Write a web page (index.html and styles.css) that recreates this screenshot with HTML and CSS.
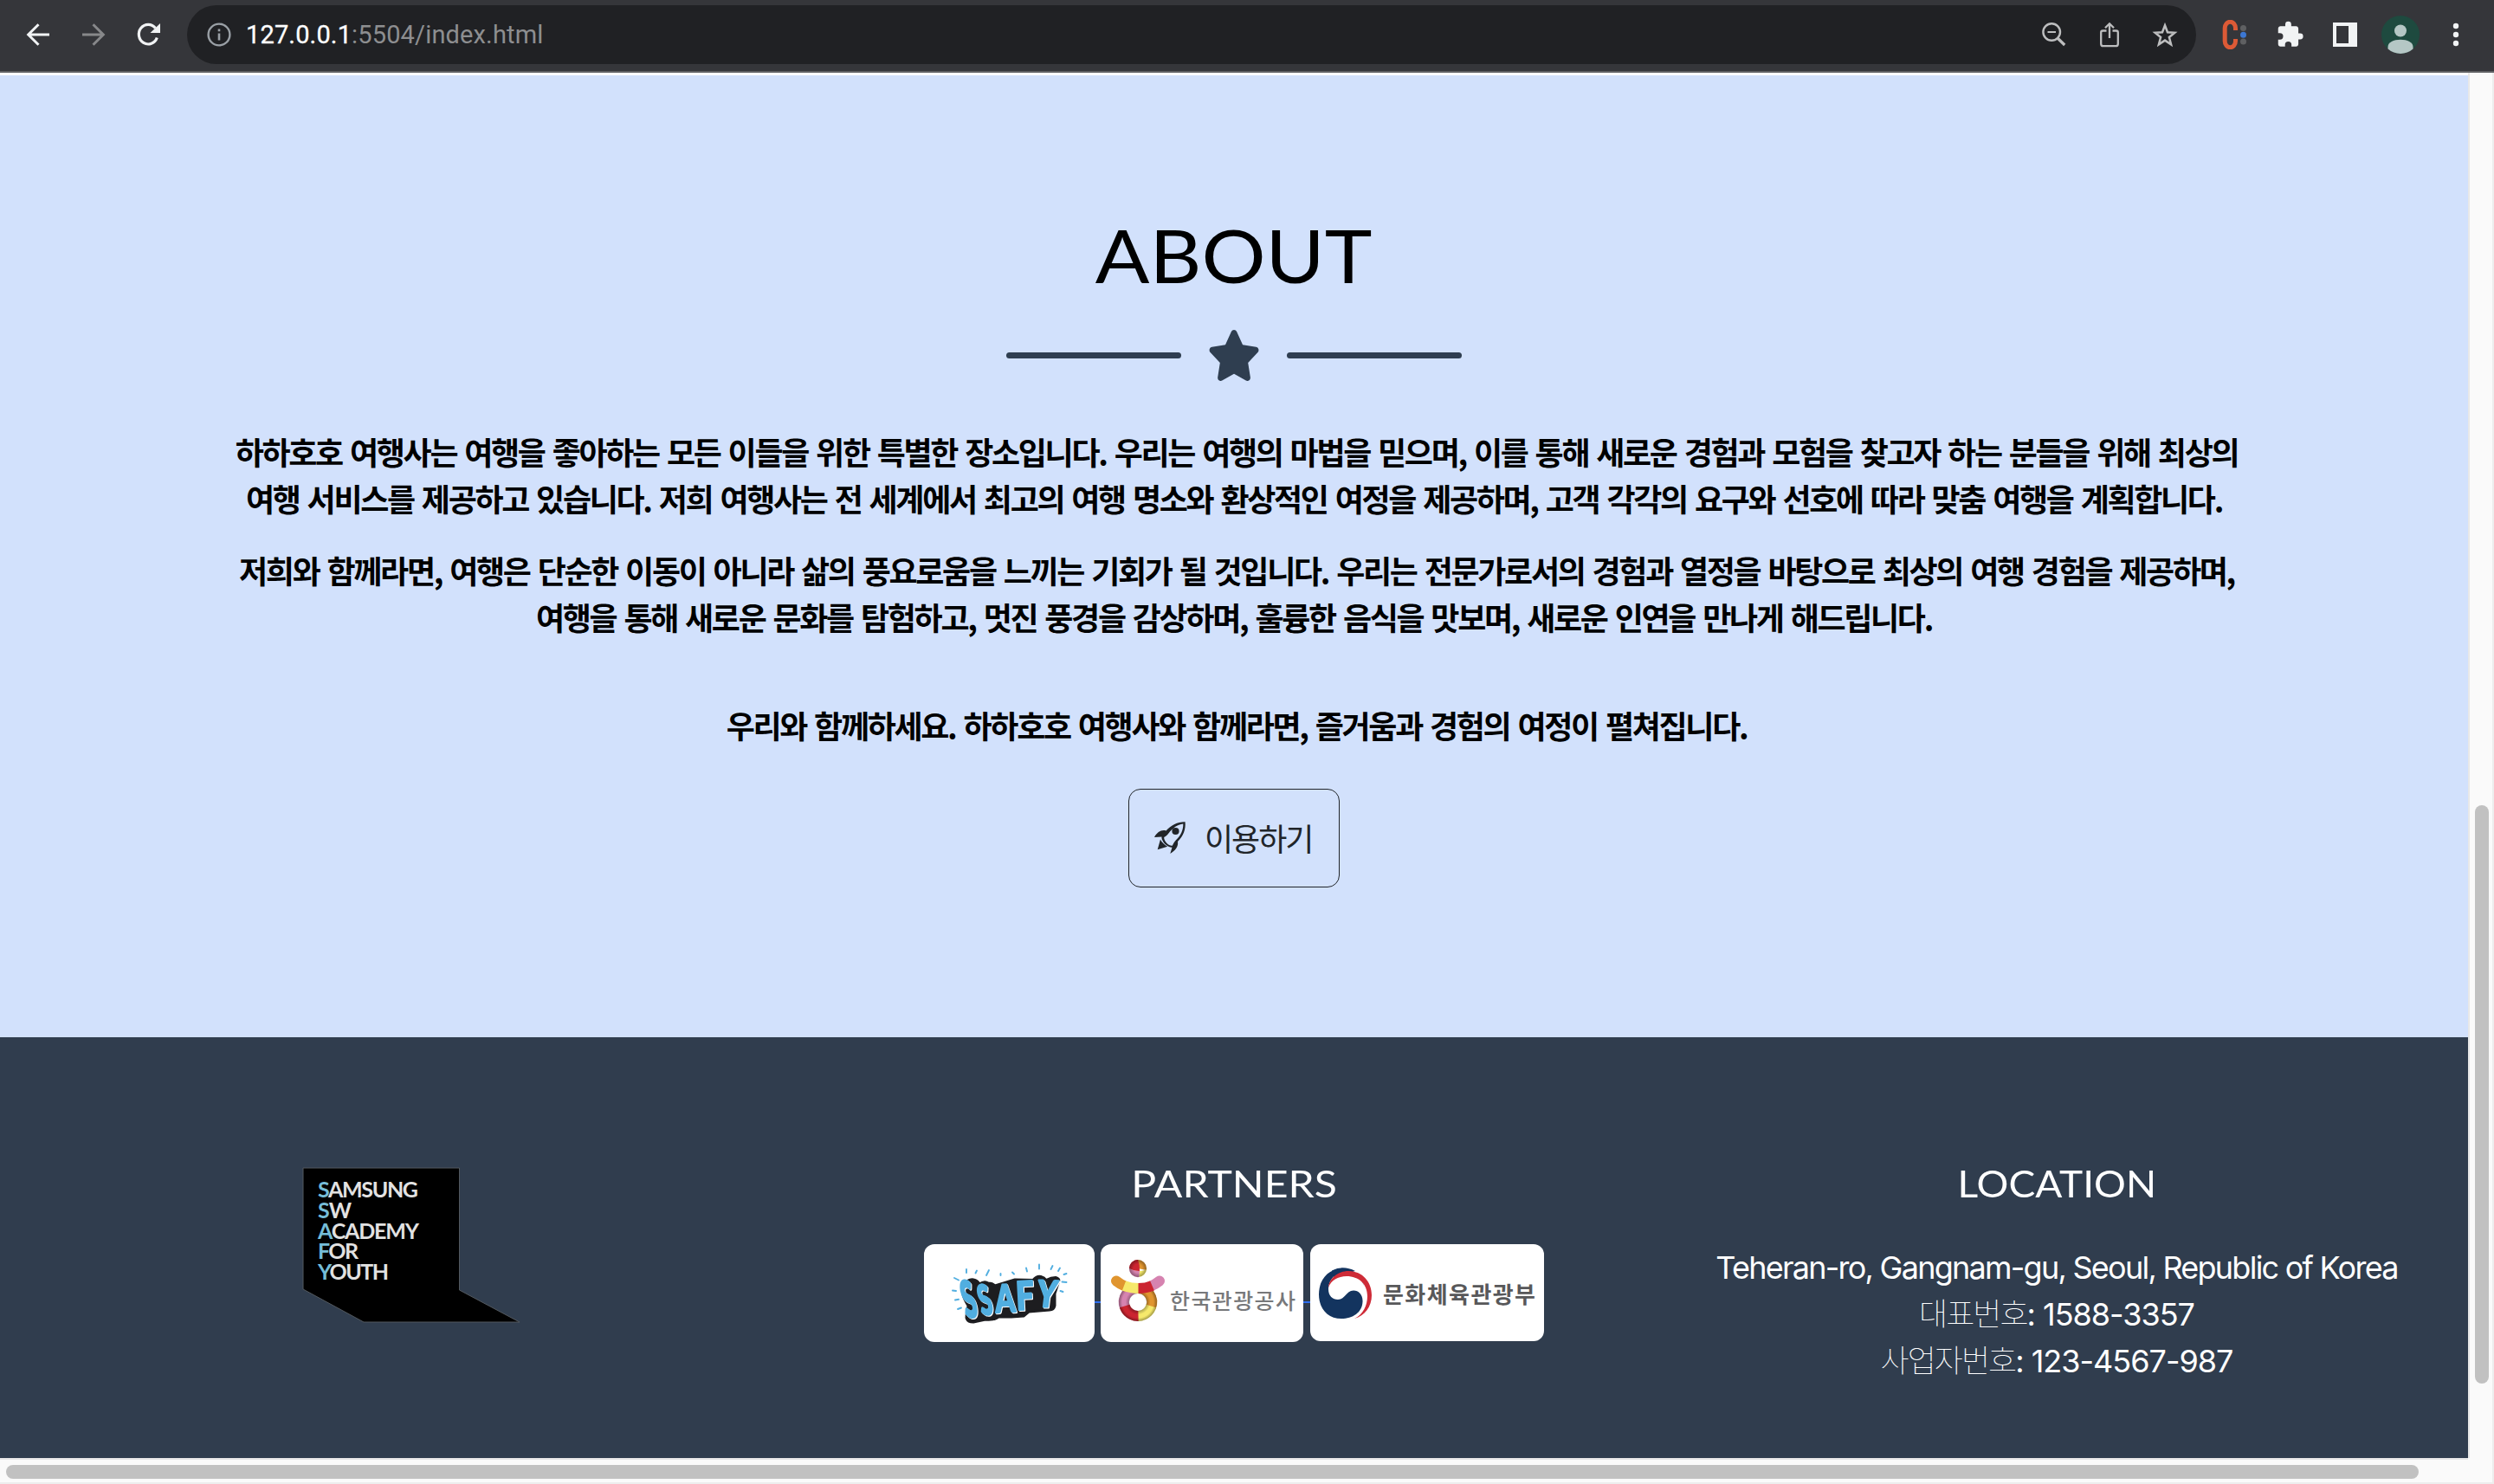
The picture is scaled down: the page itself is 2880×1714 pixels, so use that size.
FILE: index.html
```html
<!DOCTYPE html>
<html lang="ko">
<head>
<meta charset="utf-8">
<title>하하호호 여행사</title>
<link rel="stylesheet" href="styles.css">
</head>
<body>
<header class="toolbar">
  <div class="nav">
    <svg width="30" height="30" viewBox="0 0 30 30" fill="none" stroke="#f1f3f4" stroke-width="3"><path d="M28 15H4M15.500 3.200 3.700 15l11.800 11.800"/></svg>
    <svg width="30" height="30" viewBox="0 0 30 30" fill="none" stroke="#87888a" stroke-width="3"><path d="M2 15h24M14.500 3.200 26.300 15 14.500 26.800"/></svg>
    <svg width="30" height="30" viewBox="0 0 30 30"><path d="M24.300 18.500A10.800 11.300 0 1 1 22.500 7.500" fill="none" stroke="#f1f3f4" stroke-width="3.200"/><path d="M28 2v11H16.500z" fill="#f1f3f4"/></svg>
  </div>
  <div class="omnibox">
    <svg class="info" width="28" height="28" viewBox="0 0 28 28"><circle cx="14" cy="14" r="12.400" fill="none" stroke="#9aa0a6" stroke-width="2.400"/><path d="M12.700 12.500h2.600v8h-2.600zM12.700 7.500h2.600v2.700h-2.600z" fill="#9aa0a6"/></svg>
    <div class="url"><b>127.0.0.1</b>:5504/index.html</div>
    <div class="actions">
      <svg width="32" height="32" viewBox="0 0 32 32" fill="none" stroke="#bdbebf" stroke-width="2.400"><circle cx="13.200" cy="13" r="9.800"/><path d="M8.500 13h9.500" stroke-width="2"/><path d="m20 20 8.200 8" stroke-width="3.200"/></svg>
      <svg width="32" height="32" viewBox="0 0 32 32" fill="none" stroke="#bdbebf" stroke-width="2.300"><path d="M12.500 11.500H8.200a2 2 0 0 0-2 2v13.200a2.500 2.500 0 0 0 2.500 2.500h14.600a2.500 2.500 0 0 0 2.500-2.500V13.500a2 2 0 0 0-2-2h-4.300M16 20V3.500M11 8.300l5-5 5 5"/></svg>
      <svg width="32" height="32" viewBox="0 0 32 32" fill="none" stroke="#bdbebf" stroke-width="2.500"><path d="m16 5.200 3 8 8.300.5-6.400 5.300 2.200 8.300-7.100-4.700-7.100 4.700L11.100 19l-6.400-5.300 8.300-.5z"/></svg>
    </div>
  </div>
  <div class="extensions">
    <svg width="34" height="34" viewBox="0 0 34 34"><path d="M18.500 12V9.500a5.500 6.500 0 0 0-12.300 0v15a5.500 6.500 0 0 0 12.300 0V22" fill="none" stroke="#dd5a36" stroke-width="5"/><circle cx="27.500" cy="9.500" r="3.500" fill="#5f6062"/><circle cx="27.500" cy="25" r="3.500" fill="#5f6062"/><circle cx="27.500" cy="17.200" r="3.500" fill="#3c77d2"/></svg>
    <svg width="34" height="34" viewBox="0 0 24 24"><path transform="translate(.7 .3) scale(.97)" fill="#f1f3f4" d="M20.500 11H19V7c0-1.100-.9-2-2-2h-4V3.500a2.500 2.500 0 0 0-5 0V5H4c-1.100 0-2 .9-2 2v3.800h1.500a2.700 2.700 0 0 1 0 5.400H2V20c0 1.100.9 2 2 2h3.800v-1.500a2.700 2.700 0 0 1 5.400 0V22H17c1.100 0 2-.9 2-2v-4h1.500a2.500 2.500 0 0 0 0-5z"/></svg>
    <svg width="34" height="34" viewBox="0 0 34 34"><path fill="#f1f3f4" fill-rule="evenodd" d="M3 3h28v28H3zM7 7v20h14V7z"/></svg>
    <svg class="avatar" width="44" height="44" viewBox="0 0 44 44"><circle cx="22" cy="22" r="22" fill="#1e4a3f"/><circle cx="22" cy="17.500" r="7" fill="#b5c7c5"/><path d="M7.500 36c0-5 6.500-8.200 14.500-8.200S36.500 31 36.500 36v2.500a22 22 0 0 1-29 0z" fill="#b5c7c5"/></svg>
    <svg width="34" height="34" viewBox="0 0 34 34" fill="#f1f3f4"><circle cx="17" cy="7" r="3.200"/><circle cx="17" cy="17" r="3.200"/><circle cx="17" cy="27" r="3.200"/></svg>
  </div>
</header>
<div class="viewport">
  <div class="page">
    <section class="about">
      <h2 class="title"><span>ABOUT</span></h2>
      <div class="divider">
        <i></i>
        <svg width="62" height="59" viewBox="0 0 576 512" preserveAspectRatio="none"><path fill="#2f3e50" d="M316.900 18C311.600 7 300.400 0 288.100 0s-23.400 7-28.800 18L195 150.300 51.400 171.500c-12 1.800-22 10.200-25.700 21.700s-.7 24.200 7.900 32.700L137.800 329 113.200 474.700c-2 12 3 24.200 12.900 31.300s23 8 33.800 2.300l128.300-68.500 128.300 68.500c10.800 5.700 23.900 4.900 33.800-2.300s14.900-19.300 12.900-31.300L438.500 329 542.700 225.900c8.600-8.500 11.700-21.200 7.900-32.700s-13.700-19.900-25.700-21.700L381.200 150.300 316.900 18z"/></svg>
        <i></i>
      </div>
      <p class="lead">하하호호 여행사는 여행을 좋아하는 모든 이들을 위한 특별한 장소입니다. 우리는 여행의 마법을 믿으며, 이를 통해 새로운 경험과 모험을 찾고자 하는 분들을 위해 최상의<br>여행 서비스를 제공하고 있습니다. 저희 여행사는 전 세계에서 최고의 여행 명소와 환상적인 여정을 제공하며, 고객 각각의 요구와 선호에 따라 맞춤 여행을 계획합니다.</p>
      <p class="lead">저희와 함께라면, 여행은 단순한 이동이 아니라 삶의 풍요로움을 느끼는 기회가 될 것입니다. 우리는 전문가로서의 경험과 열정을 바탕으로 최상의 여행 경험을 제공하며,<br>여행을 통해 새로운 문화를 탐험하고, 멋진 풍경을 감상하며, 훌륭한 음식을 맛보며, 새로운 인연을 만나게 해드립니다.</p>
      <p class="lead closing">우리와 함께하세요. 하하호호 여행사와 함께라면, 즐거움과 경험의 여정이 펼쳐집니다.</p>
      <a class="start">
        <svg width="38" height="38" viewBox="0 0 38 38" fill="#212529"><path fill-rule="evenodd" d="M36.600 1.200C28 1 20.500 5 14.500 11.500 9 10 4.500 13 1 19l8.500-.5c-.5 2 1.500 6 4 8.500s6 4 8 3.800L19.300 38c6-3.500 9.700-8.500 8.700-14C34.500 17.500 37.500 10 36.600 1.200zM34.300 3.500C34.500 11 31.500 17 26 22.300c-1.800 1.900-3 4.200-4.200 6.400-2 .3-4.700-.9-6.600-3-2-2-3.200-4.700-3-6.700 1.500-1 4-2.500 5-4.300C22 8.500 27.500 4.300 34.300 3.500z"/><circle cx="25.500" cy="12" r="4.100"/><path d="M8 21.500 4.700 33.300l11.500-3.600C12.500 27.500 9.500 25 8 21.500z"/></svg>
        <span>이용하기</span>
      </a>
    </section>
    <footer class="footer">
      <div class="brand">
        <svg width="254" height="180" viewBox="0 0 254 180">
          <path d="M0 0H180.500V141L250 178H70L0 140z" stroke="#53595f" stroke-width="1"/>
          <g class="brand-text">
            <text x="17" y="34" textLength="116"><tspan>S</tspan>AMSUNG</text>
            <text x="17" y="58" textLength="39"><tspan>S</tspan>W</text>
            <text x="17" y="81.500" textLength="117"><tspan>A</tspan>CADEMY</text>
            <text x="17" y="105" textLength="47"><tspan>F</tspan>OR</text>
            <text x="17" y="129" textLength="82"><tspan>Y</tspan>OUTH</text>
          </g>
        </svg>
      </div>
      <div class="partners">
        <h4><span>PARTNERS</span></h4>
        <div class="cards">
          <a class="card ssafy">
            <svg width="197" height="113" viewBox="0 0 197 113">
              <g stroke="#51aee0" stroke-width="1.900" stroke-linecap="round"><path d="m35 39 5 2.500M33 53.500l4 .5M36 64.500l4-.7M39 75l4-1.500M49 29v4M61 30.500l-1.500 3M75 30l-3 6M88.500 34v2M102 32.500l2 2M118 27.500l1 4M133 23.500v5M148.500 25l-2 4M157 27.500l-2 3.500M161.500 35l3-1M159.500 43.500l5 .5M157.500 54l3 1"/></g>
              <path fill="#1d1d20" stroke="#1d1d20" stroke-width="3" stroke-linejoin="round" d="M46 47q5-7 11-6 5 1 7 5 6-4 10-1 5 0 8 3l23-7 21 .5q4-5 9-4 4 1 6 4 6-3 11-3 5 1 3.500 5L151 57v14q-1 5-6 5l-24 2-6 5-14 1-15 0q-5 4-15 3l-14 3q-7 0-8-5 0-4 1-7l1-7q-5-8-6-13-1-7 1-11z"/>
              <g class="ssafy-mark"><text transform="translate(49 85) rotate(-7) skewX(7) scale(.58 1.220)">S</text><text transform="translate(67 82) rotate(-7) skewX(7) scale(.56 1)">S</text><text transform="translate(83 79) rotate(-3) scale(.68 .92)">A</text><text transform="translate(107 76) rotate(-3) scale(.76 .94)">F</text><text transform="translate(129 72) rotate(2) skewX(-5) scale(.72 .88)">Y</text></g>
            </svg>
          </a>
          <i class="link-gap"></i>
          <a class="card kto">
            <svg width="234" height="113" viewBox="0 0 234 113">
              <defs>
                <radialGradient id="ball"><stop offset=".5" stop-color="#000" stop-opacity="0"/><stop offset="1" stop-color="#000" stop-opacity=".35"/></radialGradient>
                <radialGradient id="ring" gradientUnits="userSpaceOnUse" cx="43" cy="67" r="22"><stop offset=".45" stop-color="#000" stop-opacity=".3"/><stop offset=".65" stop-color="#000" stop-opacity="0"/><stop offset=".82" stop-color="#000" stop-opacity="0"/><stop offset="1" stop-color="#000" stop-opacity=".35"/></radialGradient>
              </defs>
              <g fill="none" stroke-width="12">
                <path stroke="#d683b0" d="M28 73A16 16 0 0 1 43 51"/>
                <path stroke="#e0952f" d="M43 51A16 16 0 0 1 58 73"/>
                <path stroke="#f6e96b" d="M58.300 71.500A16 16 0 0 1 43 83"/>
                <path stroke="#cb2430" d="M43.500 83A16 16 0 0 1 27.700 71.500"/>
                <circle cx="43" cy="67" r="16" stroke="url(#ring)"/>
                <g stroke-linecap="round"><path stroke="#e0952f" d="M18 42.500q5 4 10 6"/><path stroke="#d683b0" d="M68 42.500q-5 4-10 6"/></g>
                <path stroke="#f6e96b" d="M27 48q8 3 17 3"/><path stroke="#cb2430" d="M43.500 51q9 0 16-3"/>
              </g>
              <path d="M43 28V18A10 10 0 0 0 33 28z" fill="#cb2430"/><path d="M43 28V18A10 10 0 0 1 53 28v2z" fill="#e0952f"/><path d="M33 28q5 3 12 3l-.5 7A10 10 0 0 1 33 28z" fill="#d683b0"/><path d="M45 31q5 0 8-2A10 10 0 0 1 44.500 38z" fill="#f6e96b"/><path d="M43 18q2.500 6 2 13-7 0-12-3A10 10 0 0 1 43 18z" fill="#cb2430"/><circle cx="43" cy="28" r="10" fill="url(#ball)"/>
              <text class="kto-name" x="80" y="75" textLength="145">한국관광공사</text>
            </svg>
          </a>
          <i class="link-gap wide"></i>
          <a class="card mcst">
            <svg width="270" height="112" viewBox="0 0 270 112">
              <path fill="#13345f" d="M30.500 27.500C47 26.500 60 36 62 48c-4-13-16-17-26-15-11 2-15 12-15 19 0 8 5 12 11 12 9-.5 9-10 18-10.500 6 0 11 5 10.500 13C60 79 49 86 36 86 20 86 10 74 10 58c0-16 9-28.500 27-30.500z"/>
              <path fill="#13345f" d="M25 30.500Q38 24 52 31l-14 4-10 5z"/>
              <path fill="#ce2b37" d="M21 50C22 39 33 30.500 45 31c15 .5 26 12 26 28 0 13-8 24-20 27 10-5 15-15 15-26 0-14-10-23-24-23-10 0-18 5-21 13z"/>
              <text class="mcst-name" x="84" y="68" textLength="176">문화체육관광부</text>
            </svg>
          </a>
        </div>
      </div>
      <div class="location">
        <h4><span>LOCATION</span></h4>
        <address><span class="street">Teheran-ro, Gangnam-gu, Seoul, Republic of Korea</span><br><span class="thin">대표번호</span>: 1588-3357<br><span class="thin">사업자번호</span>: 123-4567-987</address>
      </div>
    </footer>
  </div>
  <div class="vbar"><i></i></div>
  <div class="hbar"><i></i></div>
  <div class="corner"></div>
</div>
</body>
</html>
```
FILE: styles.css
```css
* { box-sizing: border-box; }
body {
  margin: 0;
  width: 2880px;
  height: 1714px;
  overflow: hidden;
  display: flex;
  flex-direction: column;
  font-family: Inter, "Noto Sans CJK KR", sans-serif;
}
svg { display: block; flex: none; }
h2, h4, p { margin: 0; font-weight: 400; }

.toolbar {
  height: 84px;
  flex: none;
  display: flex;
  align-items: flex-start;
  background: #35363a;
  border-bottom: 2px solid #5f6063;
}
.nav { display: flex; gap: 34px; padding: 25px 0 0 29px; width: 216px; }
.omnibox {
  display: flex;
  align-items: center;
  width: 2320px;
  height: 68px;
  margin-top: 6px;
  padding: 0 20px 0 23px;
  border-radius: 34px;
  background: #202124;
}
.url {
  margin-left: 17px;
  font: 400 29px/68px Roboto, sans-serif;
  letter-spacing: .15px;
  color: #8d8e90;
}
.url b { font-weight: 400; color: #fff; -webkit-text-stroke: .3px #fff; }
.actions { display: flex; gap: 32px; margin-left: auto; }
.extensions { display: flex; align-items: center; gap: 30px; height: 80px; padding-left: 27px; }
.avatar { margin: 0 -5px; }

.viewport {
  flex: 1;
  display: grid;
  grid-template: 1600px 30px / 2850px 30px;
}
.page { display: flex; flex-direction: column; }

.about {
  height: 1114px;
  border-top: 3px solid #fff;
  background: #d2e1fc;
  display: flex;
  flex-direction: column;
  align-items: center;
  color: #000;
}
.title { margin-top: 154px; height: 109px; font: 400 85px/106px Lato, sans-serif; }
.title span { display: inline-block; transform: scaleX(1.09); }
.divider { display: flex; align-items: center; gap: 30px; margin-top: 31px; height: 59px; }
.divider i { width: 202px; height: 7px; border-radius: 4px; background: #2f3e50; }
.lead {
  margin-top: 29px;
  font: 700 36px/54px "Noto Sans CJK KR", sans-serif;
  letter-spacing: -2.320px;
  word-spacing: 1.300px;
  text-align: center;
  text-indent: 6px;
  white-space: nowrap;
}
.divider + .lead { margin-top: 54px; }
.closing { margin-top: 71px; }
.start {
  display: flex;
  align-items: center;
  width: 244px;
  height: 114px;
  margin-top: 47px;
  padding: 0 0 3px 28px;
  border: 1px solid #212529;
  border-radius: 14px;
  color: #212529;
  font: 400 36px/54px "Noto Sans CJK KR", sans-serif;
  letter-spacing: -2px;
}
.start span { margin-left: 21px; }

.footer {
  height: 486px;
  display: grid;
  grid-template-columns: repeat(3, 950px);
  background: #303d4e;
  color: #fff;
  text-align: center;
}
.brand { padding: 151px 0 0 350px; }
.brand svg { overflow: visible; }
.brand-text { font: 700 25px Lato, sans-serif; fill: #e2e2e2; }
.brand-text tspan { fill: #74bdd8; }
h4 { margin-top: 142px; font: 400 43px/54px Lato, sans-serif; }
h4 span { display: inline-block; transform: scaleX(1.12); }
.location h4 span { transform: scaleX(1.07); }
.cards { display: flex; justify-content: center; margin-top: 43px; }
.card { border-radius: 12px; background: #fff; overflow: hidden; }
.mcst { height: 112px; }
.link-gap { width: 7px; height: 2px; margin-top: 66px; background: #2f6ff0; }
.link-gap.wide { width: 8px; }
.ssafy-mark {
  font: 900 48px Lato, sans-serif;
  fill: #51aee0;
  stroke: #51aee0;
  stroke-width: 2.500px;
  stroke-linejoin: round;
  filter: drop-shadow(1.300px 1.300px 0 #fff);
}
.kto-name { font: 500 25px "Noto Sans CJK KR", sans-serif; fill: #77787a; }
.mcst-name { font: 700 26px "Noto Sans CJK KR", sans-serif; fill: #58585a; }
address {
  margin-top: 43px;
  font: 400 36px/54px Inter, "Noto Sans CJK KR", sans-serif;
  letter-spacing: -1px;
  white-space: nowrap;
}
.street { letter-spacing: -1.750px; }
.thin { font-family: "Noto Sans CJK KR", sans-serif; font-weight: 100; line-height: 1; letter-spacing: -2px; }

.vbar { background: #fafafa; border-left: 2px solid #e8e8e8; border-right: 2px solid #ededed; padding: 846px 4px 0 6px; }
.vbar i { display: block; height: 668px; border-radius: 8px; background: #c1c1c1; }
.hbar { background: #fafafa; border-top: 2px solid #e8e8e8; border-bottom: 2px solid #ededed; padding: 6px 0 0 7px; }
.hbar i { display: block; width: 2786px; height: 16px; border-radius: 8px; background: #c1c1c1; }
.corner { background: #fafafa; border-right: 2px solid #ededed; border-bottom: 2px solid #ededed; }
```
